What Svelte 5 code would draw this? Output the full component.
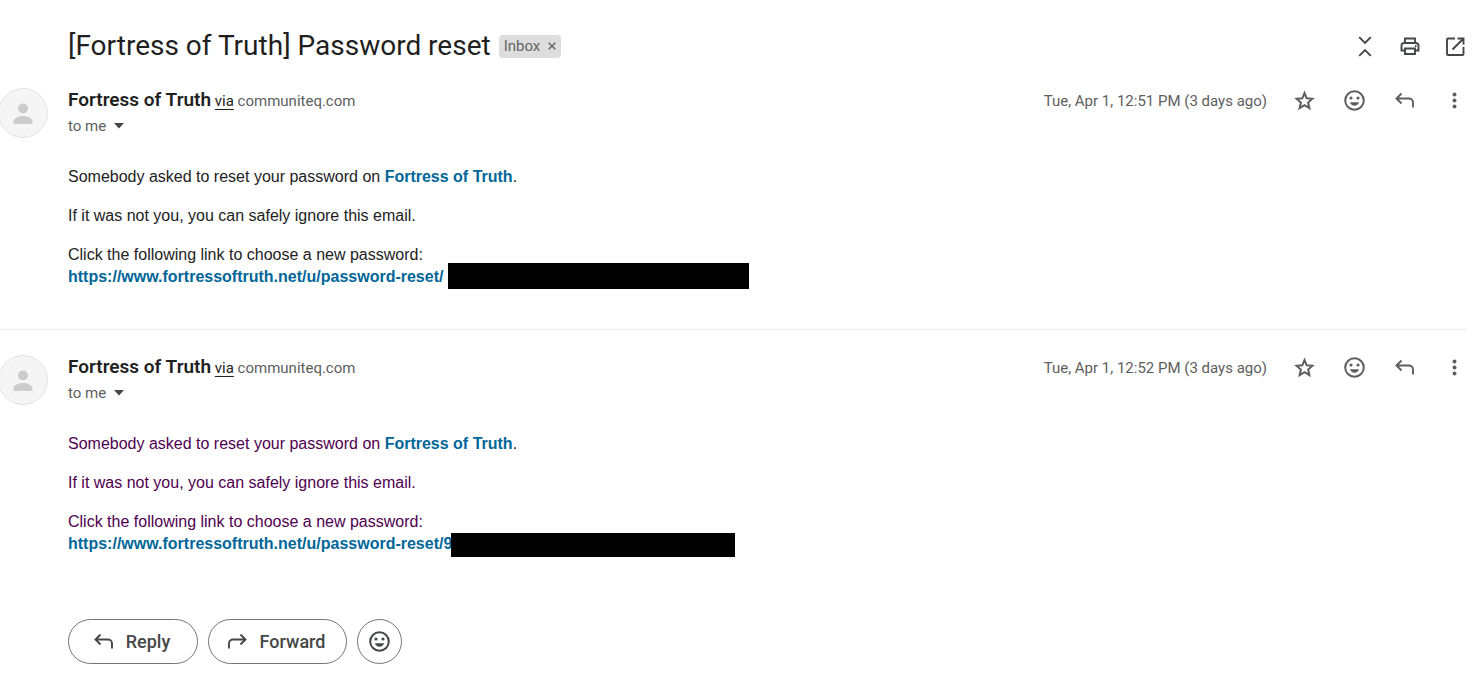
<script lang="ts">
  interface Message {
    id: number;
    sender: string;
    via: string;
    date: string;
    visited: boolean;
    linkTail: string;
    redaction: { left: number; width: number; height: number };
  }

  const resetUrl = 'https://www.fortressoftruth.net/u/password-reset/';

  const messages: Message[] = [
    {
      id: 1,
      sender: 'Fortress of Truth',
      via: 'communiteq.com',
      date: 'Tue, Apr 1, 12:51 PM (3 days ago)',
      visited: false,
      linkTail: '',
      redaction: { left: 380, width: 301, height: 26 },
    },
    {
      id: 2,
      sender: 'Fortress of Truth',
      via: 'communiteq.com',
      date: 'Tue, Apr 1, 12:52 PM (3 days ago)',
      visited: true,
      linkTail: '9',
      redaction: { left: 383, width: 284, height: 24 },
    },
  ];

  let starred = $state<Record<number, boolean>>({});
  let labelled = $state(true);

  function toggleStar(id: number) {
    starred[id] = !starred[id];
  }
</script>

{#snippet smiley()}
  <svg class="icon" viewBox="0 0 25 25" aria-hidden="true">
    <circle cx="12.500" cy="12.500" r="9.300" fill="none" stroke="currentColor" stroke-width="2" />
    <circle cx="9" cy="10" r="1.600" />
    <circle cx="16" cy="10" r="1.600" />
    <path d="M8 14.200h9c-.6 2.200-2.300 3.500-4.500 3.500s-3.900-1.300-4.500-3.500z" />
  </svg>
{/snippet}

{#snippet replyArrow()}
  <svg class="icon line" viewBox="0 0 25 25" aria-hidden="true">
    <path d="M9.500 5.500 4.500 10.500l5 5M4.500 10.500h12.500a4 4 0 0 1 4 4v5" />
  </svg>
{/snippet}

<main class="thread">
  <header class="subject-row">
    <h1>[Fortress of Truth] Password reset</h1>
    {#if labelled}
      <span class="label">
        Inbox
        <button aria-label="Remove label Inbox" onclick={() => (labelled = false)}>
          <svg viewBox="0 0 8 8" aria-hidden="true"><path d="M.7.7l6.600 6.600M7.300.7.7 7.300" /></svg>
        </button>
      </span>
    {/if}
    <div class="toolbar">
      <button aria-label="Collapse all">
        <svg class="icon line" viewBox="0 0 25 25" aria-hidden="true">
          <path d="M7.200 3.200l5.800 5.800 5.800-5.800M7.200 21.800l5.800-5.800 5.800 5.800" />
        </svg>
      </button>
      <button aria-label="Print all">
        <svg class="icon line" viewBox="0 0 25 25" aria-hidden="true">
          <path d="M8 9V4.500h10V9M8 16.500H4.500v-5A2.500 2.500 0 0 1 7 9h12a2.500 2.500 0 0 1 2.500 2.500v5H18M8 14.500h10v5.500H8z" />
          <circle class="dot" cx="18.700" cy="12" r="1" />
        </svg>
      </button>
      <button aria-label="In new window">
        <svg class="icon line" viewBox="0 0 25 25" aria-hidden="true">
          <path d="M13 4.500H6a1 1 0 0 0-1 1V20a1 1 0 0 0 1 1h14.500a1 1 0 0 0 1-1v-7M15.500 4.500h6v6M21.500 4.500 10.500 15.500" />
        </svg>
      </button>
    </div>
  </header>

  {#each messages as message (message.id)}
    <article class="message">
      <svg class="avatar" viewBox="0 0 50 50" aria-hidden="true">
        <circle cx="25" cy="25" r="24.500" fill="#f5f5f5" stroke="#e2e2e2" />
        <circle cx="25" cy="20.500" r="5" fill="#ccc" />
        <path d="M15.500 36v-2.500c0-3.500 5.500-5.500 9.500-5.500s9.500 2 9.500 5.500V36z" fill="#ccc" />
      </svg>

      <div class="content">
        <div class="head">
          <div class="from">
            <div class="sender">
              <strong>{message.sender}</strong>
              <a class="via" href="#via">via</a>
              <span>{message.via}</span>
            </div>
            <button class="recipient" aria-label="Show details">
              to me
              <svg viewBox="0 0 10 6" aria-hidden="true"><path d="M0 0h10L5 5.500z" /></svg>
            </button>
          </div>

          <div class="meta">
            <time>{message.date}</time>
            <button aria-label="Star" aria-pressed={!!starred[message.id]} onclick={() => toggleStar(message.id)}>
              <svg class="icon" viewBox="0 0 25 25" aria-hidden="true">
                <path
                  d="M12.500 5l2.200 5.300 5.700.5-4.300 3.800 1.300 5.600-4.900-3-4.900 3 1.300-5.600-4.300-3.800 5.700-.5z"
                  fill={starred[message.id] ? '#f4b400' : 'none'}
                  stroke="currentColor"
                  stroke-width="2"
                />
              </svg>
            </button>
            <button aria-label="Add reaction">{@render smiley()}</button>
            <button aria-label="Reply">{@render replyArrow()}</button>
            <button aria-label="More">
              <svg class="icon" viewBox="0 0 25 25" aria-hidden="true">
                <circle cx="12.500" cy="6.500" r="2" />
                <circle cx="12.500" cy="12.500" r="2" />
                <circle cx="12.500" cy="18.500" r="2" />
              </svg>
            </button>
          </div>
        </div>

        <div class="body" class:visited={message.visited}>
          <p>Somebody asked to reset your password on <a href="#site">Fortress of Truth</a>.</p>
          <p>If it was not you, you can safely ignore this email.</p>
          <p>
            Click the following link to choose a new password:<br />
            <span class="reset-link">
              <a href="#reset">{resetUrl}{message.linkTail}</a>
              <span
                class="redaction"
                style="left: {message.redaction.left}px; width: {message.redaction.width}px; height: {message.redaction.height}px"
              ></span>
            </span>
          </p>
        </div>
      </div>
    </article>
  {/each}

  <footer class="actions">
    <button class="pill">{@render replyArrow()}Reply</button>
    <button class="pill forward"><span class="flip">{@render replyArrow()}</span>Forward</button>
    <button class="pill round" aria-label="Add reaction">{@render smiley()}</button>
  </footer>
</main>

<style>
  :global(body) {
    background: #fff;
  }

  .thread {
    padding: 29px 15px 15px 0;
    font-family: 'Google Sans', Roboto, sans-serif;
    font-size: 15px;
    color: #5e5e5e;
  }

  button {
    display: flex;
    align-items: center;
    padding: 0;
    border: 0;
    background: none;
    color: #444746;
    font: inherit;
    cursor: pointer;
  }

  .icon {
    display: block;
    width: 25px;
    height: 25px;
    fill: currentColor;
  }

  .icon.line {
    fill: none;
    stroke: currentColor;
    stroke-width: 1.9;
  }

  .icon .dot {
    fill: currentColor;
    stroke: none;
  }

  .subject-row {
    display: flex;
    align-items: center;
    height: 34px;
    padding-left: 68px;
  }

  h1 {
    margin: 0;
    font-size: 28px;
    font-weight: 400;
    line-height: 34px;
    color: #1f1f1f;
  }

  .label {
    display: flex;
    align-items: center;
    gap: 8px;
    height: 23px;
    margin-left: 8px;
    padding: 0 5px;
    border-radius: 4px;
    background: #ddd;
    color: #666;
  }

  .label svg {
    width: 8px;
    height: 8px;
    stroke: #666;
    stroke-width: 1.5;
  }

  .toolbar {
    display: flex;
    gap: 20px;
    margin-left: auto;
  }

  .message {
    display: flex;
    gap: 20px;
    padding: 25px 0 41px;
  }

  .message + .message {
    border-top: 1px solid #ececec;
    padding-bottom: 0;
  }

  .avatar {
    flex: none;
    width: 50px;
    height: 50px;
    margin-left: -2px;
  }

  .content {
    flex: 1;
    min-width: 0;
  }

  .head {
    display: flex;
    justify-content: space-between;
    height: 50px;
  }

  .sender {
    line-height: 24px;
  }

  .sender strong {
    font-size: 19px;
    font-weight: 600;
    color: #1f1f1f;
  }

  .via {
    color: #222;
    text-underline-offset: 3px;
  }

  .recipient {
    gap: 8px;
    height: 26px;
    color: #5e5e5e;
  }

  .recipient svg {
    width: 10px;
    height: 6px;
    fill: #444746;
  }

  .meta {
    display: flex;
    align-items: center;
    gap: 25px;
    height: 25px;
  }

  .meta button {
    color: #5e5e5e;
  }

  .body {
    margin-top: 28px;
    font-family: 'Liberation Sans', Arial, sans-serif;
    font-size: 16px;
    line-height: 22px;
    color: #222;
  }

  .body.visited {
    color: #500050;
  }

  .body p {
    margin: 0 0 17px;
  }

  .body p:last-child {
    margin-bottom: 0;
  }

  .body a {
    color: #006699;
    font-weight: 700;
    text-decoration: none;
  }

  .reset-link {
    display: block;
    position: relative;
  }

  .redaction {
    position: absolute;
    top: -3px;
    background: #000;
  }

  .visited .redaction {
    top: 0;
  }

  .actions {
    display: flex;
    gap: 10px;
    margin-top: 64px;
    padding-left: 68px;
  }

  .pill {
    justify-content: center;
    gap: 10px;
    width: 130px;
    height: 45px;
    padding-right: 5px;
    border: 1px solid #747775;
    border-radius: 23px;
    font-size: 18px;
    font-weight: 500;
  }

  .pill.forward {
    width: 139px;
  }

  .pill.round {
    width: 45px;
    padding: 0;
  }

  .flip {
    transform: scaleX(-1);
  }
</style>
